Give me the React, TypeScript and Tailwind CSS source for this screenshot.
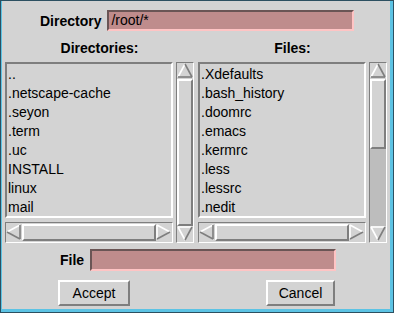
import React from 'react'

const dirs = ['..', '.netscape-cache', '.seyon', '.term', '.uc', 'INSTALL', 'linux', 'mail']
const files = ['.Xdefaults', '.bash_history', '.doomrc', '.emacs', '.kermrc', '.less', '.lessrc', '.nedit']

const sunken = 'border-2 border-t-[#7e7e7e] border-l-[#7e7e7e] border-b-white border-r-white'
const raised = 'border-2 border-t-white border-l-white border-b-[#7e7e7e] border-r-[#7e7e7e]'
const field = 'border-2 border-t-[#6a5555] border-l-[#6a5555] border-b-[#ffc4c4] border-r-[#ffc4c4] bg-[#bf8c8c]'

function Arrow({ dir }: { dir: 'up' | 'down' | 'left' | 'right' }) {
    // light edges on the top/left, dark edges on the bottom/right
    const lines: Record<string, [string, string][]> = {
        up: [['8,1 1,14', '#fff'], ['8,1 15,14', '#7e7e7e'], ['1,14 15,14', '#7e7e7e']],
        down: [['1,1 15,1', '#fff'], ['1,1 8,14', '#fff'], ['15,1 8,14', '#7e7e7e']],
        left: [['1,8 14,1', '#fff'], ['1,8 14,15', '#7e7e7e'], ['14,1 14,15', '#7e7e7e']],
        right: [['1,1 14,8', '#fff'], ['1,1 1,15', '#fff'], ['1,15 14,8', '#7e7e7e']],
    }
    return (
        <svg width="16" height="16" viewBox="0 0 16 16" className="block shrink-0">
            {lines[dir].map(([pts, color]) => (
                <polyline key={pts} points={pts} fill="none" stroke={color} strokeWidth="1.6" />
            ))}
        </svg>
    )
}

function VScroll({ thumb }: { thumb: number | null }) {
    return (
        <div className="row-span-2 w-[18px] h-[181px] flex flex-col border border-t-[#7e7e7e] border-l-[#7e7e7e] border-b-white border-r-white">
            <Arrow dir="up" />
            <div className="flex-1 flex flex-col bg-[#bdbdbd]">
                {thumb === null ? (
                    <div className={`flex-1 bg-[#d3d3d3] ${raised}`} />
                ) : (
                    <div className={`bg-[#d3d3d3] ${raised}`} style={{ height: thumb }} />
                )}
            </div>
            <Arrow dir="down" />
        </div>
    )
}

function HScroll() {
    return (
        <div className="h-[21px] flex items-center border border-t-[#7e7e7e] border-l-[#7e7e7e] border-b-white border-r-white">
            <Arrow dir="left" />
            <div className={`flex-1 h-[17px] bg-[#d3d3d3] ${raised}`} />
            <Arrow dir="right" />
        </div>
    )
}

function Pane({ title, items, thumb }: { title: string; items: string[]; thumb: number | null }) {
    return (
        <div className="flex flex-col">
            <div className="h-[31px] pt-[9px] text-center font-bold text-[14px] leading-4">{title}</div>
            <div className="grid grid-cols-[168px_18px] gap-x-[3px] gap-y-[3px]">
                <div className={`h-[156px] bg-[#d3d3d3] pt-[1px] pl-px ${sunken}`}>
                    {items.map(it => (
                        <div key={it} className="h-[19px] leading-[19px] text-[14px] whitespace-nowrap">{it}</div>
                    ))}
                </div>
                <VScroll thumb={thumb} />
                <HScroll />
            </div>
        </div>
    )
}

export default function App() {
    return (
        <div className="w-[394px] h-[313px] bg-[#2c5061] p-px" style={{ fontFamily: '"Liberation Sans", Arial, sans-serif' }}>
            <div className="w-full h-full border-l border-r-[3px] border-b-[3px] border-[#5cc3e4] bg-[#d3d3d3] text-black flex flex-col">
                {/* Directory row */}
                <div className="flex items-center gap-[6px] pl-[38px] pt-[9px] h-[30px]">
                    <span className="font-bold text-[14px] leading-4">Directory</span>
                    <div className={`w-[247px] h-[21px] ${field} flex items-center pl-[2px] text-[14px]`}>/root/*</div>
                </div>

                {/* Lists */}
                <div className="flex gap-[4px] pl-[3px]">
                    <Pane title="Directories:" items={dirs} thumb={null} />
                    <Pane title="Files:" items={files} thumb={70} />
                </div>

                {/* File row */}
                <div className="flex items-center gap-[6px] pl-[58px] pt-[6px]">
                    <span className="font-bold text-[14px]">File</span>
                    <div className={`w-[246px] h-[22px] ${field}`} />
                </div>

                {/* Buttons */}
                <div className="flex pl-[56px] pt-[9px]">
                    <button className={`w-[72px] h-[26px] bg-[#d3d3d3] text-[14px] ${raised}`}>Accept</button>
                    <button className={`w-[69px] h-[26px] ml-[136px] bg-[#d3d3d3] text-[14px] ${raised}`}>Cancel</button>
                </div>
            </div>
        </div>
    )
}
